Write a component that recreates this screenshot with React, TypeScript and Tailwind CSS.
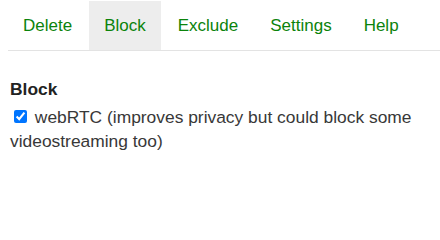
import { useState } from 'react'

const tabs = ['Delete', 'Block', 'Exclude', 'Settings', 'Help']

export default function App() {
  const [active, setActive] = useState('Block')
  const [webrtc, setWebrtc] = useState(true)

  return (
    <div className="w-[440px] h-[202px] bg-white font-['Liberation_Sans',Arial,sans-serif] text-[17px]">
      {/* Tab bar */}
      <nav className="ml-[8px] pt-[1px] flex gap-[2px] border-b border-[#e3e3e3]">
        {tabs.map((t) => (
          <button
            key={t}
            onClick={() => setActive(t)}
            className={`h-[49px] px-[15px] text-[#0b830b] leading-none ${
              active === t ? 'bg-[#ededed]' : 'bg-transparent'
            }`}
          >
            {t}
          </button>
        ))}
      </nav>

      {/* Block section */}
      <div className="px-[10px] pt-[26px] text-[#383838] text-[17.4px]">
        <h3 className="font-bold text-[#222] leading-[24px]">Block</h3>
        <label className="block mt-[4px] leading-[24px]">
          <input
            type="checkbox"
            checked={webrtc}
            onChange={(e) => setWebrtc(e.target.checked)}
            className="m-[3px_3px_3px_4px] w-[13px] h-[13px] align-baseline"
          />{' '}
          webRTC (improves privacy but could block some videostreaming too)
        </label>
      </div>
    </div>
  )
}
